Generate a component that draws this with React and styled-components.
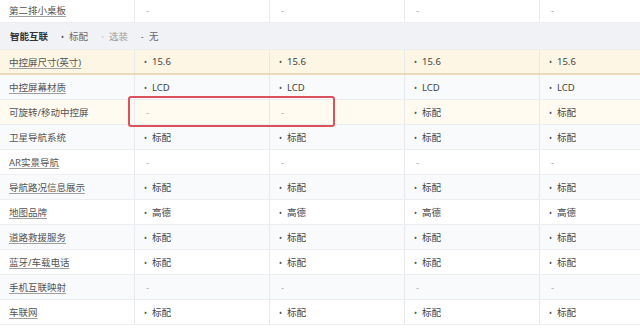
import React from 'react';
import styled, { createGlobalStyle } from 'styled-components';

const GlobalStyle = createGlobalStyle`
  html, body { margin: 0; padding: 0; background: #fff; overflow: hidden; }
  body { font-family: "Noto Sans", "Noto Sans CJK SC", sans-serif; font-size: 9.5px; color: #333; }
`;

const rows = [
  { label: '中控屏尺寸(英寸)', link: true, vals: ['15.6', '15.6', '15.6', '15.6'], tone: 'selected' },
  { label: '中控屏幕材质', link: true, vals: ['LCD', 'LCD', 'LCD', 'LCD'], tone: 'gray' },
  { label: '可旋转/移动中控屏', link: false, vals: [null, null, '标配', '标配'], tone: 'hover', boxed: true },
  { label: '卫星导航系统', link: false, vals: ['标配', '标配', '标配', '标配'], tone: 'gray' },
  { label: 'AR实景导航', link: true, vals: [null, null, null, null], tone: 'white' },
  { label: '导航路况信息展示', link: true, vals: ['标配', '标配', '标配', '标配'], tone: 'gray' },
  { label: '地图品牌', link: true, vals: ['高德', '高德', '高德', '高德'], tone: 'white' },
  { label: '道路救援服务', link: true, vals: ['标配', '标配', '标配', '标配'], tone: 'gray' },
  { label: '蓝牙/车载电话', link: true, vals: ['标配', '标配', '标配', '标配'], tone: 'white' },
  { label: '手机互联映射', link: true, vals: [null, null, null, null], tone: 'gray' },
  { label: '车联网', link: true, vals: ['标配', '标配', '标配', '标配'], tone: 'white' },
];

const bg = {
  white: '#ffffff',
  gray: '#f9fafc',
  selected: '#fdf6e4',
  hover: '#fffbf1',
};

const App = () => (
  <Page>
    <GlobalStyle />
    <Table>
      <Row tone="white">
        <Label><Link>第二排小桌板</Link></Label>
        {[0, 1, 2, 3].map((i) => (
          <Cell key={i}><Dash>-</Dash></Cell>
        ))}
      </Row>
      <Section>
        <strong>智能互联</strong>
        <Legend><Dot>•</Dot>标配</Legend>
        <Legend $light><Dot $light>•</Dot>选装</Legend>
        <Legend><Dot>-</Dot>无</Legend>
      </Section>
      {rows.map((r) => (
        <Row key={r.label} tone={r.tone} $selected={r.tone === 'selected'}>
          <Label>{r.link ? <Link>{r.label}</Link> : r.label}</Label>
          {r.vals.map((v, i) => (
            <Cell key={i}>
              {v ? (
                <>
                  <Dot>•</Dot>
                  {v}
                </>
              ) : (
                <Dash>-</Dash>
              )}
            </Cell>
          ))}
          {r.boxed && <Highlight />}
        </Row>
      ))}
    </Table>
  </Page>
);

export default App;

const Page = styled.div`
  width: 640px;
  height: 328px;
  overflow: hidden;
`;

const Table = styled.div`
  width: 674px;
  margin-top: -2px;
`;

const Row = styled.div`
  position: relative;
  display: grid;
  grid-template-columns: 134px repeat(4, 135px);
  height: 25px;
  box-sizing: border-box;
  background: ${(p) => bg[p.tone]};
  border-bottom: ${(p) => (p.$selected ? '2px solid #ead9bb' : '1px solid #eceef2')};
`;

const Label = styled.div`
  display: flex;
  align-items: center;
  padding-left: 9px;
  color: #555;
  white-space: nowrap;
`;

const Link = styled.span`
  text-decoration: underline;
  text-decoration-color: #a0a0a0;
  text-underline-offset: 2px;
`;

const Cell = styled.div`
  display: flex;
  align-items: center;
  padding-left: 9px;
  border-left: 1px solid #e8e9ee;
  color: #444;
  white-space: nowrap;
`;

const Dot = styled.span`
  display: inline-block;
  width: 8px;
  font-size: 8px;
  color: ${(p) => (p.$light ? '#d4d4d4' : '#555')};
`;

const Dash = styled.span`
  color: #aaa;
  padding-left: 2px;
`;

const Section = styled.div`
  display: flex;
  align-items: center;
  gap: 13px;
  height: 27px;
  box-sizing: border-box;
  padding-left: 10px;
  background: #f1f2f6;
  border-bottom: 1px solid #eceef2;
  strong { font-weight: bold; color: #333; }
`;

const Legend = styled.span`
  color: ${(p) => (p.$light ? '#999' : '#666')};
`;

const Highlight = styled.div`
  position: absolute;
  z-index: 2;
  left: 128px;
  top: -4px;
  width: 207px;
  height: 31px;
  box-sizing: border-box;
  border: 2px solid #d9525c;
  border-radius: 3px;
  pointer-events: none;
`;
